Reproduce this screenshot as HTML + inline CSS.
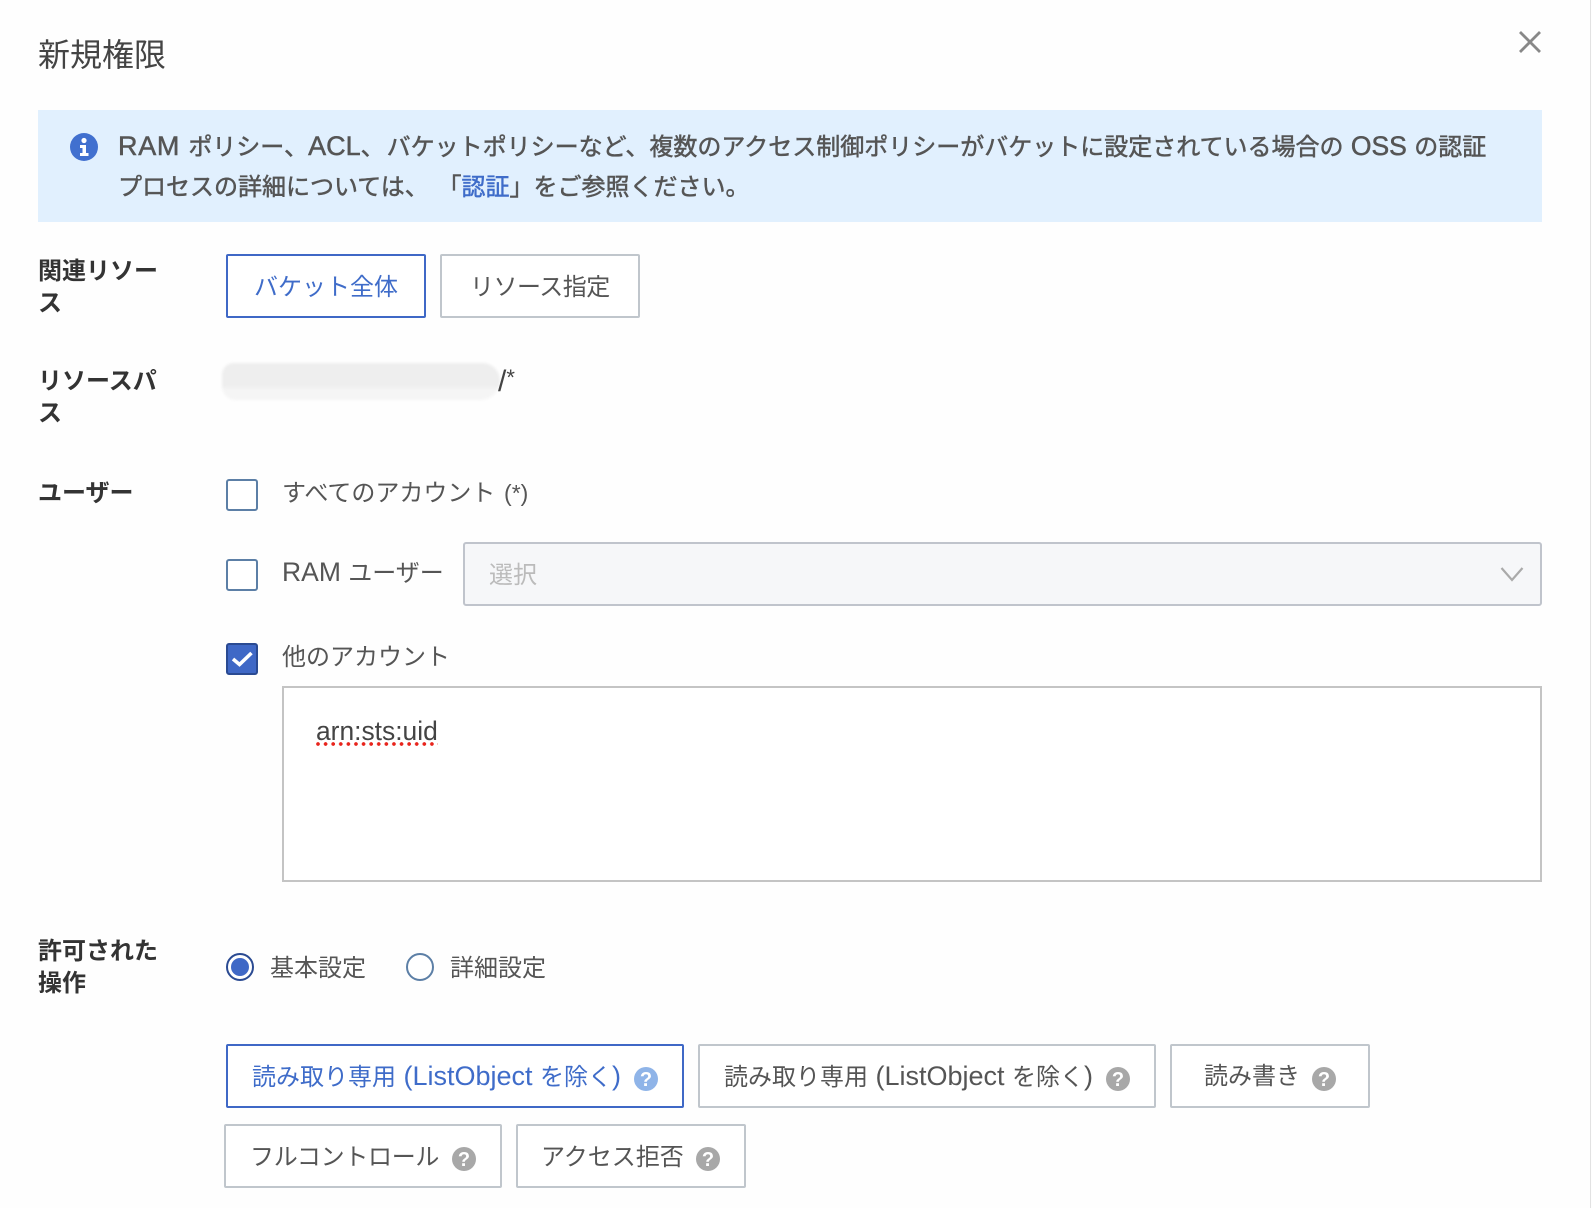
<!DOCTYPE html>
<html lang="ja">
<head>
<meta charset="utf-8">
<title>新規権限</title>
<style>
html,body{margin:0;padding:0;background:#fefefe;}
body{width:1592px;height:1208px;position:relative;overflow:hidden;font-family:"Liberation Sans","Noto Sans CJK JP",sans-serif;color:#555;font-size:24px;}
.t{position:absolute;white-space:nowrap;line-height:32px;height:32px;}
.t i{font-style:normal;font-size:27px;line-height:20px;}
.lb{font-weight:700;color:#333;}
.b{position:absolute;box-sizing:border-box;border:2px solid #c0c6cc;border-radius:2px;background:#fff;height:64px;}
.b.on{border-color:#3f68c6;}
.blue{color:#3f6cc9;}
.cb{position:absolute;box-sizing:border-box;width:32px;height:32px;border:2px solid #5c7fa6;border-radius:3px;background:#fff;left:226px;}
svg{position:absolute;display:block;}
.r{position:absolute;box-sizing:border-box;width:28px;height:28px;border-radius:50%;top:953px;background:#fff;}
</style>
</head>
<body>
<div style="position:absolute;left:1590px;top:0;width:1px;height:1208px;background:#e2e2e2"></div>

<div class="t" style="left:38px;top:35px;font-size:32px;line-height:40px;height:40px;color:#444">新規権限</div>
<svg style="left:1518px;top:30px" width="24" height="24" viewBox="0 0 24 24"><path d="M2 2L22 22M22 2L2 22" stroke="#888" stroke-width="2.8" fill="none"/></svg>

<div style="position:absolute;left:38px;top:110px;width:1504px;height:112px;background:#e1f0fe"></div>
<svg style="left:70px;top:133px" width="28" height="28" viewBox="0 0 28 28"><circle cx="14" cy="14" r="14" fill="#4170cf"/><circle cx="14" cy="7.5" r="2.6" fill="#fff"/><path d="M10 12H16V20H18.5V23H10V20H12.5V15H10Z" fill="#fff"/></svg>
<div class="t" style="left:118px;top:132px;color:#555;-webkit-text-stroke:.5px #555"><i style="letter-spacing:.7px">RAM </i>ポリシー、<i>ACL</i>、<span style="margin-left:2px">バ</span>ケットポリシーなど、複数のアクセス制御ポリシーがバケットに設定されている場合の<i style="font-size:26.5px"> OSS </i>の認証</div>
<div class="t" style="left:118px;top:172px;color:#555;-webkit-text-stroke:.5px #555">プロセスの詳細については、 <span style="margin-left:2px">「</span><span style="color:#3f6cc9;-webkit-text-stroke:.5px #3f6cc9">認証</span>」をご参照ください。</div>

<div class="t lb" style="left:38px;top:256px">関連リソー</div>
<div class="t lb" style="left:38px;top:288px">ス</div>
<div class="b on" style="left:226px;top:254px;width:200px"></div>
<div class="t blue" style="left:254px;top:272px">バケット全体</div>
<div class="b" style="left:440px;top:254px;width:200px"></div>
<div class="t" style="left:470px;top:272px;letter-spacing:-.5px">リソース指定</div>

<div class="t lb" style="left:38px;top:366px">リソースパ</div>
<div class="t lb" style="left:38px;top:398px">ス</div>
<div style="position:absolute;left:222px;top:363px;width:278px;height:37px;background:linear-gradient(#eeeeee 0,#eeeeee 62%,#f5f5f5 72%,#f5f5f5 100%);border-radius:12px 18px 20px 14px;filter:blur(1.2px)"></div>
<div class="t" style="left:498px;top:368px;color:#444"><i style="font-size:30px">/</i><span style="font-size:22px;position:relative;top:-6px">*</span></div>

<div class="t lb" style="left:38px;top:478px">ユーザー</div>
<div class="cb" style="top:479px"></div>
<div class="t" style="left:282px;top:477px">すべてのアカウント <span style="margin-left:2px;font-size:23px">(*)</span></div>
<div class="cb" style="top:559px"></div>
<div class="t" style="left:282px;top:558px"><i style="font-size:26.5px">RAM </i>ユーザー</div>
<div style="position:absolute;box-sizing:border-box;left:463px;top:542px;width:1079px;height:64px;background:#f6f7f9;border:2px solid #c0c4cc;border-radius:3px"></div>
<div class="t" style="left:489px;top:560px;color:#bbb">選択</div>
<svg style="left:1500px;top:566px" width="24" height="16" viewBox="0 0 24 16"><path d="M1.5 2L12 14L22.5 2" stroke="#aaa" stroke-width="2.2" fill="none"/></svg>
<div class="cb" style="top:643px;background:#3f68c6;border-color:#2a4a92"></div>
<svg style="left:226px;top:643px" width="32" height="32" viewBox="0 0 32 32"><path d="M7 16L13.5 21.5L25.5 10" stroke="#fff" stroke-width="3.6" fill="none"/></svg>
<div class="t" style="left:282px;top:642px">他のアカウント</div>
<div style="position:absolute;box-sizing:border-box;left:282px;top:686px;width:1260px;height:196px;border:2px solid #c4c4c4;background:#fff"></div>
<div class="t" style="left:316px;top:715px;font-size:26.4px;color:#444">arn:sts:uid</div>
<div style="position:absolute;left:316px;top:742px;width:122px;height:4px;background-image:radial-gradient(circle at 2px 2px,#e8241c 1.7px,transparent 2px);background-size:7.6px 4px"></div>

<div class="t lb" style="left:38px;top:936px">許可された</div>
<div class="t lb" style="left:38px;top:968px">操作</div>
<div class="r" style="left:226px;border:2px solid #2a4a92"></div>
<div style="position:absolute;left:231px;top:958px;width:18px;height:18px;border-radius:50%;background:#3f68c6"></div>
<div class="t" style="left:270px;top:953px">基本設定</div>
<div class="r" style="left:406px;border:2px solid #5c7fa6"></div>
<div class="t" style="left:450px;top:953px">詳細設定</div>

<div class="b on" style="left:226px;top:1044px;width:458px"></div>
<div class="t blue" style="left:252px;top:1062px">読み取り専用<i> (ListObject </i>を除く<i>)</i></div>
<svg style="left:634px;top:1067px" width="24" height="24" viewBox="0 0 24 24"><circle cx="12" cy="12" r="12" fill="#8fb4e8"/><text x="12" y="19" text-anchor="middle" font-family="Liberation Sans" font-weight="700" font-size="20" fill="#fff">?</text></svg>

<div class="b" style="left:698px;top:1044px;width:458px"></div>
<div class="t" style="left:724px;top:1062px">読み取り専用<i> (ListObject </i>を除く<i>)</i></div>
<svg style="left:1106px;top:1067px" width="24" height="24" viewBox="0 0 24 24"><circle cx="12" cy="12" r="12" fill="#a8a8a8"/><text x="12" y="19" text-anchor="middle" font-family="Liberation Sans" font-weight="700" font-size="20" fill="#fff">?</text></svg>

<div class="b" style="left:1170px;top:1044px;width:200px"></div>
<div class="t" style="left:1204px;top:1061px">読み書き</div>
<svg style="left:1312px;top:1067px" width="24" height="24" viewBox="0 0 24 24"><circle cx="12" cy="12" r="12" fill="#a8a8a8"/><text x="12" y="19" text-anchor="middle" font-family="Liberation Sans" font-weight="700" font-size="20" fill="#fff">?</text></svg>

<div class="b" style="left:224px;top:1124px;width:278px"></div>
<div class="t" style="left:250px;top:1142px;letter-spacing:-.3px">フルコントロール</div>
<svg style="left:452px;top:1147px" width="24" height="24" viewBox="0 0 24 24"><circle cx="12" cy="12" r="12" fill="#a8a8a8"/><text x="12" y="19" text-anchor="middle" font-family="Liberation Sans" font-weight="700" font-size="20" fill="#fff">?</text></svg>

<div class="b" style="left:516px;top:1124px;width:230px"></div>
<div class="t" style="left:541px;top:1142px">アクセス拒否</div>
<svg style="left:696px;top:1147px" width="24" height="24" viewBox="0 0 24 24"><circle cx="12" cy="12" r="12" fill="#a8a8a8"/><text x="12" y="19" text-anchor="middle" font-family="Liberation Sans" font-weight="700" font-size="20" fill="#fff">?</text></svg>
</body>
</html>
